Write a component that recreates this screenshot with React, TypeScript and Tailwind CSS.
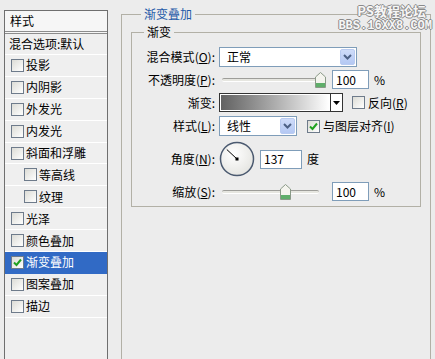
import type { ReactNode } from 'react'

const items = [
  { label: '投影' },
  { label: '内阴影' },
  { label: '外发光' },
  { label: '内发光' },
  { label: '斜面和浮雕' },
  { label: '等高线', sub: true },
  { label: '纹理', sub: true },
  { label: '光泽' },
  { label: '颜色叠加' },
  { label: '渐变叠加', selected: true },
  { label: '图案叠加' },
  { label: '描边' },
]

function CheckBox({ checked = false }: { checked?: boolean }) {
  return (
    <span className="w-[13px] h-[13px] shrink-0 border border-[#6e7b8b] bg-gradient-to-br from-[#dcdcd6] to-white flex items-center justify-center">
      {checked && (
        <svg width="9" height="9" viewBox="0 0 9 9">
          <path d="M1 4.5 L3.5 7 L8 1.5" fill="none" stroke="#21a121" strokeWidth="2" />
        </svg>
      )}
    </span>
  )
}

function DropButton() {
  return (
    <span className="w-[15px] h-[16px] mr-[1px] rounded-[2px] border border-[#b9cbf1] bg-gradient-to-b from-[#cfdcf9] to-[#b4c8f3] flex items-center justify-center">
      <svg width="9" height="6" viewBox="0 0 9 6">
        <path d="M1 1 L4.5 4.5 L8 1" fill="none" stroke="#4d6185" strokeWidth="2" />
      </svg>
    </span>
  )
}

function Select({ value, width }: { value: string; width: string }) {
  return (
    <div className={`${width} h-[20px] border border-[#7f9db9] bg-white flex items-center justify-between pl-[7px]`}>
      <span>{value}</span>
      <DropButton />
    </div>
  )
}

function Thumb() {
  return (
    <svg width="11" height="16" viewBox="0 0 11 16" className="absolute top-[-7px]">
      <path d="M5.5 0.5 L10.5 5 L10.5 15.5 L0.5 15.5 L0.5 5 Z" fill="#f4f4ee" stroke="#8a9a88" />
      <rect x="1" y="11" width="9" height="4" fill="#5fae6a" />
    </svg>
  )
}

function Slider({ width, pos }: { width: string; pos: string }) {
  return (
    <div className={`${width} relative h-[4px] rounded-full border-t border-[#9d9d99] border-b border-b-white bg-[#e6e6e0] ml-[3px]`}>
      <div className={`absolute ${pos}`}>
        <Thumb />
      </div>
    </div>
  )
}

function NumBox({ value, width = 'w-[37px]' }: { value: string; width?: string }) {
  return (
    <div className={`${width} h-[19px] border border-[#7f9db9] bg-white flex items-center pl-[3px]`}>
      {value}
    </div>
  )
}

function Key({ k }: { k: string }) {
  return (
    <>
      (<span className="underline">{k}</span>):
    </>
  )
}

function Row({ label, children, h }: { label: ReactNode; children: ReactNode; h: string }) {
  return (
    <div className={`flex items-center gap-[4px] ${h}`}>
      <div className="w-[83px] text-right shrink-0">{label}</div>
      {children}
    </div>
  )
}

export default function App() {
  return (
    <div className="w-[435px] h-[359px] relative overflow-hidden bg-[#ececec] flex text-[12px] leading-[16px] text-black font-['Noto_Sans_CJK_SC',sans-serif]">
      {/* style list */}
      <div className="ml-[4px] mt-[10px] w-[104px] h-[360px] shrink-0 border border-[#6f6f6f] bg-[#efefef]">
        <div className="h-[23px] px-[5px] flex items-center bg-[#f6f6f6] border-b-[3px] border-double border-[#8c8c8c]">样式</div>
        <div className="h-[21px] px-[4px] flex items-center border-b border-white">混合选项:默认</div>
        {items.map((it) => (
          <div
            key={it.label}
            className={
              'h-[21.9px] flex items-center gap-[2px] border-b ' +
              (it.sub ? 'pl-[19px] ' : 'pl-[6px] ') +
              (it.selected ? 'bg-[#316ac5] text-white border-[#316ac5]' : 'border-white')
            }
          >
            <CheckBox checked={it.selected} />
            <span>{it.label}</span>
          </div>
        ))}
      </div>

      {/* settings */}
      <fieldset className="ml-[13px] mt-[6px] w-[303px] h-[370px] shrink-0 border border-[#b2b0a6] px-[9px]">
        <legend className="ml-[10px] px-[3px] text-[#1e5aa8]">渐变叠加</legend>
        <fieldset className="mt-[2px] w-[290px] h-[183px] border border-[#b2b0a6] pt-[7px]">
          <legend className="ml-[12px] px-[3px]">渐变</legend>
          <div className="flex flex-col">
            <Row h="h-[20px]" label={<>混合模式<Key k="O" /></>}>
              <Select value="正常" width="w-[138px]" />
            </Row>
            <Row h="h-[19px] mt-[3px]" label={<>不透明度<Key k="P" /></>}>
              <Slider width="w-[102px]" pos="left-[93px]" />
              <div className="ml-[4px]"><NumBox value="100" /></div>
              <span className="ml-[1px]">%</span>
            </Row>
            <Row h="h-[19px] mt-[4px]" label="渐变:">
              <div className="flex h-[19px] border border-[#333]">
                <div className="w-[110px] h-full border border-white bg-gradient-to-r from-[#626262] to-white" />
                <div className="w-[12px] h-full bg-white border-l border-[#333] flex items-center justify-center">
                  <svg width="7" height="4" viewBox="0 0 7 4"><path d="M0 0 L7 0 L3.5 4 Z" fill="#000" /></svg>
                </div>
              </div>
              <div className="ml-[5px] flex items-center gap-[3px]">
                <CheckBox />
                <span>反向(<span className="underline">R</span>)</span>
              </div>
            </Row>
            <Row h="h-[20px] mt-[4px]" label={<>样式<Key k="L" /></>}>
              <Select value="线性" width="w-[78px]" />
              <div className="ml-[6px] flex items-center gap-[3px]">
                <CheckBox checked />
                <span>与图层对齐(<span className="underline">I</span>)</span>
              </div>
            </Row>
            <Row h="h-[36px] mt-[5px]" label={<>角度<Key k="N" /></>}>
              <svg width="36" height="36" viewBox="0 0 36 36">
                <defs>
                  <radialGradient id="dial" cx="0.4" cy="0.35" r="0.7">
                    <stop offset="0" stopColor="#ffffff" />
                    <stop offset="1" stopColor="#e4e4e0" />
                  </radialGradient>
                </defs>
                <circle cx="18" cy="18" r="16.5" fill="url(#dial)" stroke="#4b5a70" strokeWidth="1.5" />
                <line x1="18" y1="18" x2="7.8" y2="8.5" stroke="#000" strokeWidth="1" />
                <rect x="16.5" y="16.5" width="3" height="3" fill="#000" />
              </svg>
              <div className="ml-[1px]"><NumBox value="137" width="w-[42px]" /></div>
              <span className="ml-[1px]">度</span>
            </Row>
            <Row h="h-[19px] mt-[5px]" label={<>缩放<Key k="S" /></>}>
              <Slider width="w-[97px]" pos="left-[58px]" />
              <div className="ml-[9px]"><NumBox value="100" /></div>
              <span className="ml-[1px]">%</span>
            </Row>
          </div>
        </fieldset>
      </fieldset>

      {/* watermark */}
      <div className="absolute right-[3px] top-[3px] flex flex-col items-end text-[#f6f6f6] font-bold [text-shadow:1px_0_0_#8a8a8a,-1px_0_0_#8a8a8a,0_1px_0_#8a8a8a,0_-1px_0_#8a8a8a]">
        <span className="text-[13px] leading-[15px] pr-[6px]">PS教程论坛</span>
        <span className="mt-[2px] text-[12px] leading-[12px] font-['Liberation_Mono',monospace]">BBS.16XX8.COM</span>
      </div>
    </div>
  )
}
